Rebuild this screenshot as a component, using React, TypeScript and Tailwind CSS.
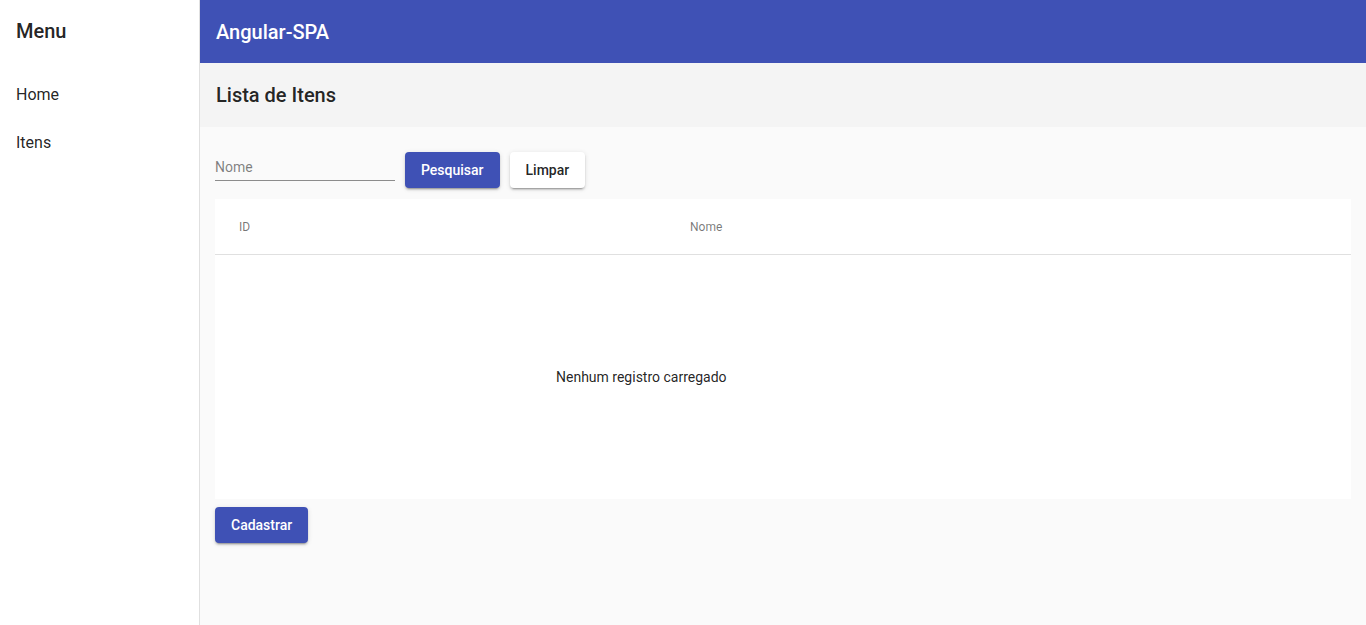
const font = { fontFamily: 'Roboto, "Noto Sans", sans-serif' };

export default function App() {
    return (
        <div className="flex h-[625px] w-full overflow-hidden text-[#212121]" style={font}>
            {/* Sidebar */}
            <aside className="w-[200px] shrink-0 border-r border-[#e0e0e0] bg-white">
                <div className="flex h-[62px] items-center px-4 text-[20px] font-medium text-black/87">Menu</div>
                <nav className="flex flex-col pt-[9px]">
                    <a className="flex h-12 items-center px-4 text-[16px] text-black/87">Home</a>
                    <a className="flex h-12 items-center px-4 text-[16px] text-black/87">Itens</a>
                </nav>
            </aside>

            {/* Main */}
            <div className="flex flex-1 flex-col bg-[#fafafa]">
                <header className="flex h-[63px] items-center bg-[#3f51b5] px-4 text-[20px] font-medium text-white">
                    Angular-SPA
                </header>
                <div className="flex h-16 items-center bg-[#f4f4f4] px-4 text-[20px] font-medium text-black/87">
                    Lista de Itens
                </div>

                <div className="px-[15px] pt-[25px]">
                    <div className="flex gap-[10px]">
                        <div className="flex h-[29px] w-[180px] items-end border-b border-[#8c8c8c]">
                            <span className="pb-[2px] text-[14px] text-black/50">Nome</span>
                        </div>
                        <button className="h-9 rounded bg-[#3f51b5] px-4 text-[14px] font-medium text-white shadow-[0_3px_1px_-2px_rgba(0,0,0,.2),0_2px_2px_0_rgba(0,0,0,.14),0_1px_5px_0_rgba(0,0,0,.12)]">
                            Pesquisar
                        </button>
                        <button className="h-9 rounded bg-white px-4 text-[14px] font-medium text-black/87 shadow-[0_3px_1px_-2px_rgba(0,0,0,.2),0_2px_2px_0_rgba(0,0,0,.14),0_1px_5px_0_rgba(0,0,0,.12)]">
                            Limpar
                        </button>
                    </div>

                    <div className="mt-[11px] h-[300px] bg-white">
                        <div className="flex h-[56px] items-center border-b border-[#e0e0e0] text-[12px] text-black/54">
                            <div className="w-[451px] pl-6">ID</div>
                            <div className="pl-6">Nome</div>
                        </div>
                        <div className="flex h-[244px] items-center pl-[341px] text-[14px] text-black/87">
                            Nenhum registro carregado
                        </div>
                    </div>

                    <button className="mt-2 h-9 rounded bg-[#3f51b5] px-4 text-[14px] font-medium text-white shadow-[0_3px_1px_-2px_rgba(0,0,0,.2),0_2px_2px_0_rgba(0,0,0,.14),0_1px_5px_0_rgba(0,0,0,.12)]">
                        Cadastrar
                    </button>
                </div>
            </div>
        </div>
    );
}
